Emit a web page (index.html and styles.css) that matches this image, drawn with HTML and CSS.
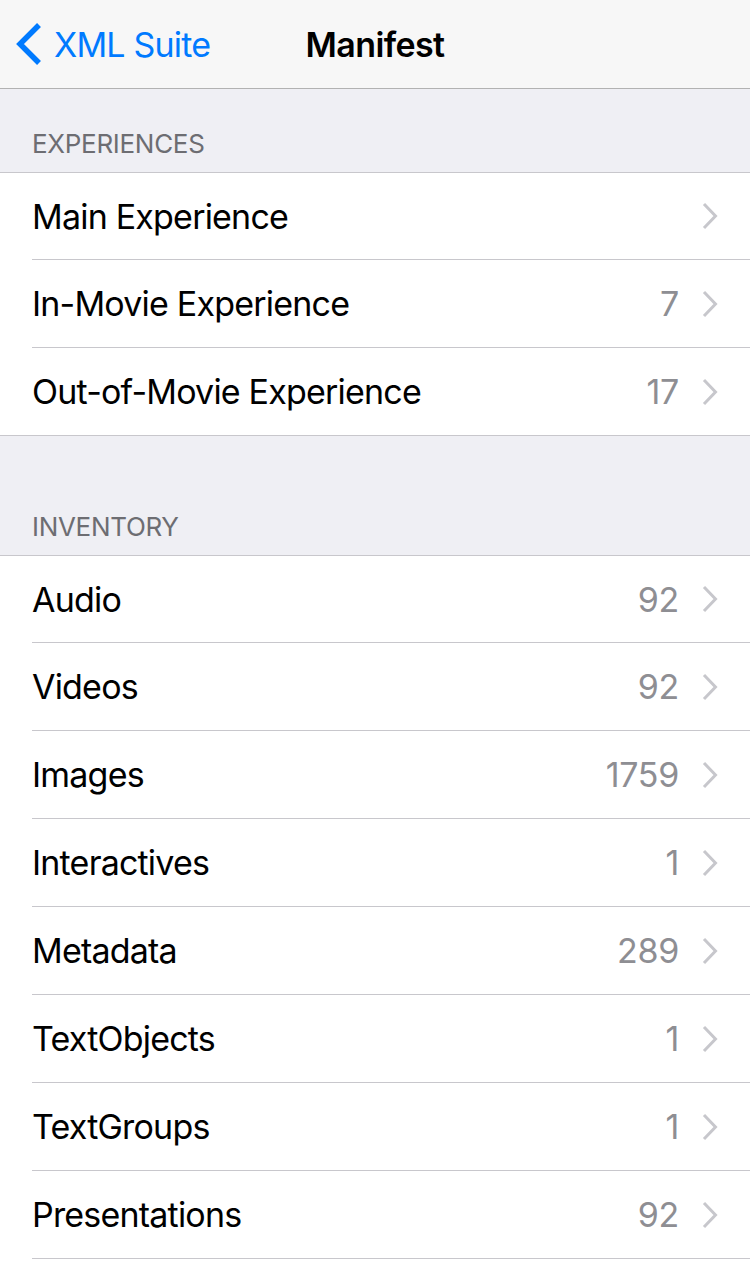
FILE: index.html
```html
<!DOCTYPE html>
<html>
<head>
<meta charset="utf-8">
<link rel="stylesheet" href="styles.css">
</head>
<body>
<header class="navbar">
  <div class="back">
    <svg class="back-chevron" width="28" height="44" viewBox="0 0 28 44"><path d="M24 3 L5 22 L24 41" fill="none" stroke="#007aff" stroke-width="5.5" stroke-linecap="butt" stroke-linejoin="miter"/></svg>
    <span class="back-label">XML Suite</span>
  </div>
  <div class="title">Manifest</div>
</header>
<main class="table">
  <div class="section-header first">EXPERIENCES</div>
  <div class="group">
    <div class="row"><div class="row-inner"><span class="label">Main Experience</span><span class="value"></span><svg class="chev" width="18" height="28" viewBox="0 0 18 28"><path d="M3 2 L14.5 14 L3 26" fill="none" stroke="#c7c7cc" stroke-width="3"/></svg></div></div>
    <div class="row"><div class="row-inner"><span class="label">In-Movie Experience</span><span class="value">7</span><svg class="chev" width="18" height="28" viewBox="0 0 18 28"><path d="M3 2 L14.5 14 L3 26" fill="none" stroke="#c7c7cc" stroke-width="3"/></svg></div></div>
    <div class="row last"><div class="row-inner"><span class="label">Out-of-Movie Experience</span><span class="value">17</span><svg class="chev" width="18" height="28" viewBox="0 0 18 28"><path d="M3 2 L14.5 14 L3 26" fill="none" stroke="#c7c7cc" stroke-width="3"/></svg></div></div>
  </div>
  <div class="section-header">INVENTORY</div>
  <div class="group">
    <div class="row"><div class="row-inner"><span class="label">Audio</span><span class="value">92</span><svg class="chev" width="18" height="28" viewBox="0 0 18 28"><path d="M3 2 L14.5 14 L3 26" fill="none" stroke="#c7c7cc" stroke-width="3"/></svg></div></div>
    <div class="row"><div class="row-inner"><span class="label">Videos</span><span class="value">92</span><svg class="chev" width="18" height="28" viewBox="0 0 18 28"><path d="M3 2 L14.5 14 L3 26" fill="none" stroke="#c7c7cc" stroke-width="3"/></svg></div></div>
    <div class="row"><div class="row-inner"><span class="label">Images</span><span class="value">1759</span><svg class="chev" width="18" height="28" viewBox="0 0 18 28"><path d="M3 2 L14.5 14 L3 26" fill="none" stroke="#c7c7cc" stroke-width="3"/></svg></div></div>
    <div class="row"><div class="row-inner"><span class="label">Interactives</span><span class="value">1</span><svg class="chev" width="18" height="28" viewBox="0 0 18 28"><path d="M3 2 L14.5 14 L3 26" fill="none" stroke="#c7c7cc" stroke-width="3"/></svg></div></div>
    <div class="row"><div class="row-inner"><span class="label">Metadata</span><span class="value">289</span><svg class="chev" width="18" height="28" viewBox="0 0 18 28"><path d="M3 2 L14.5 14 L3 26" fill="none" stroke="#c7c7cc" stroke-width="3"/></svg></div></div>
    <div class="row"><div class="row-inner"><span class="label">TextObjects</span><span class="value">1</span><svg class="chev" width="18" height="28" viewBox="0 0 18 28"><path d="M3 2 L14.5 14 L3 26" fill="none" stroke="#c7c7cc" stroke-width="3"/></svg></div></div>
    <div class="row"><div class="row-inner"><span class="label">TextGroups</span><span class="value">1</span><svg class="chev" width="18" height="28" viewBox="0 0 18 28"><path d="M3 2 L14.5 14 L3 26" fill="none" stroke="#c7c7cc" stroke-width="3"/></svg></div></div>
    <div class="row"><div class="row-inner"><span class="label">Presentations</span><span class="value">92</span><svg class="chev" width="18" height="28" viewBox="0 0 18 28"><path d="M3 2 L14.5 14 L3 26" fill="none" stroke="#c7c7cc" stroke-width="3"/></svg></div></div>
  </div>
</main>
</body>
</html>
```

FILE: styles.css
```css
* { box-sizing: border-box; }
html, body { margin: 0; padding: 0; }
body {
  width: 750px;
  height: 1272px;
  overflow: hidden;
  background: #ffffff;
  font-family: "Inter", "Roboto", "Liberation Sans", sans-serif;
  color: #000;
}
.navbar {
  height: 89px;
  background: #f7f7f7;
  border-bottom: 1px solid #b2b2b2;
  display: grid;
  grid-template-columns: 1fr auto 1fr;
  align-items: center;
}
.back {
  display: flex;
  align-items: center;
  padding-left: 15px;
  gap: 11px;
  color: #007aff;
  font-size: 34px;
  letter-spacing: -0.8px;
}
.back-chevron { display: block; }
.title {
  font-size: 34px;
  font-weight: 600;
  letter-spacing: -0.6px;
}
.table { background: #efeff4; }
.section-header {
  height: 84px;
  padding: 0 32px 13px;
  display: flex;
  align-items: flex-end;
  font-size: 26px;
  letter-spacing: -0.3px;
  color: #6d6d72;
  border-bottom: 1px solid #c8c7cc;
}
.section-header:not(.first) {
  height: 120px;
}
.group { background: #fff; }
.row {
  height: 88px;
  padding-left: 32px;
}
.row-inner {
  height: 88px;
  display: flex;
  align-items: center;
  border-bottom: 1px solid #c8c7cc;
  padding-right: 31px;
}
.row:first-child,
.row:first-child .row-inner {
  height: 87px;
}
.row.last {
  border-bottom: 1px solid #c8c7cc;
}
.row.last .row-inner {
  height: 87px;
  border-bottom: none;
}
.label {
  flex: 1;
  font-size: 34px;
  letter-spacing: -0.8px;
}
.value {
  font-size: 34px;
  color: #8e8e93;
  letter-spacing: -0.3px;
  margin-right: 22px;
}
.chev { display: block; }
```
